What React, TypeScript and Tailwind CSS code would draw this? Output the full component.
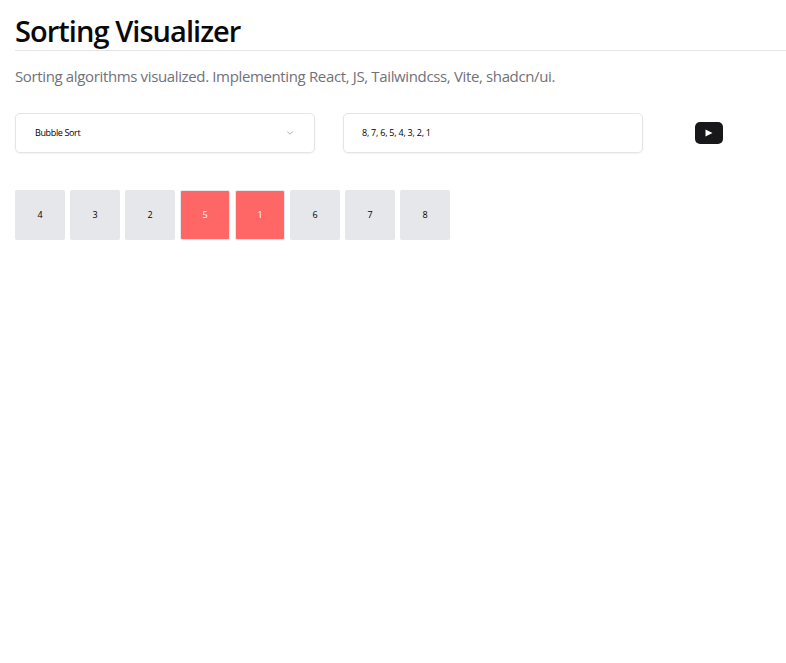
import React from "react";
import { ChevronDown } from "lucide-react";

const bars: [number, boolean][] = [
  [4, false],
  [3, false],
  [2, false],
  [5, true],
  [1, true],
  [6, false],
  [7, false],
  [8, false],
];

export default function App() {
  return (
    <div className="min-h-[663px] bg-white pl-[15px] font-['Open_Sans','Noto_Sans',sans-serif] text-[#09090b]">
      <h1 className="border-b border-[#e4e4e7] pt-[13px] pb-[1px] text-[29px] leading-[36px] font-semibold tracking-[-0.95px]">
        Sorting Visualizer
      </h1>
      <p className="mt-[13px] text-[15px] leading-[24px] tracking-[-0.36px] text-[#71717a]">
        Sorting algorithms visualized. Implementing React, JS, Tailwindcss, Vite, shadcn/ui.
      </p>
      <div className="mt-[25px] flex items-center">
        <div className="flex h-[40px] w-[300px] items-center justify-between rounded-[5px] border border-[#e4e4e7] pr-[19px] pl-[19px] text-[9px] tracking-[-0.36px] text-black shadow-[0_1px_2px_rgba(0,0,0,0.05)]">
          <span>Bubble Sort</span>
          <ChevronDown className="size-[10px] text-[#a1a1aa]" />
        </div>
        <div className="ml-[28px] flex h-[40px] w-[300px] items-center rounded-[5px] border border-[#e4e4e7] pl-[18px] text-[9px] tracking-[-0.23px] text-black shadow-[0_1px_2px_rgba(0,0,0,0.05)]">
          8, 7, 6, 5, 4, 3, 2, 1
        </div>
        <button className="ml-[52px] flex h-[22px] w-[28px] items-center justify-center rounded-[5px] bg-[#18181b]">
          <svg viewBox="0 0 8 8" className="mr-[1px] size-[8px]">
            <polygon points="0.5,0.5 7.5,4 0.5,7.5" fill="white" />
          </svg>
        </button>
      </div>
      <div className="mt-[37px] flex gap-[5px]">
        {bars.map(([n, active]) => (
          <div
            key={n}
            className={
              active
                ? "flex size-[50px] items-center justify-center rounded-[2px] border border-[#e5e7eb] bg-[#ff6666] text-[9px] text-white"
                : "flex size-[50px] items-center justify-center rounded-[2px] bg-[#e5e7eb] text-[9px] text-black"
            }
          >
            {n}
          </div>
        ))}
      </div>
    </div>
  );
}
